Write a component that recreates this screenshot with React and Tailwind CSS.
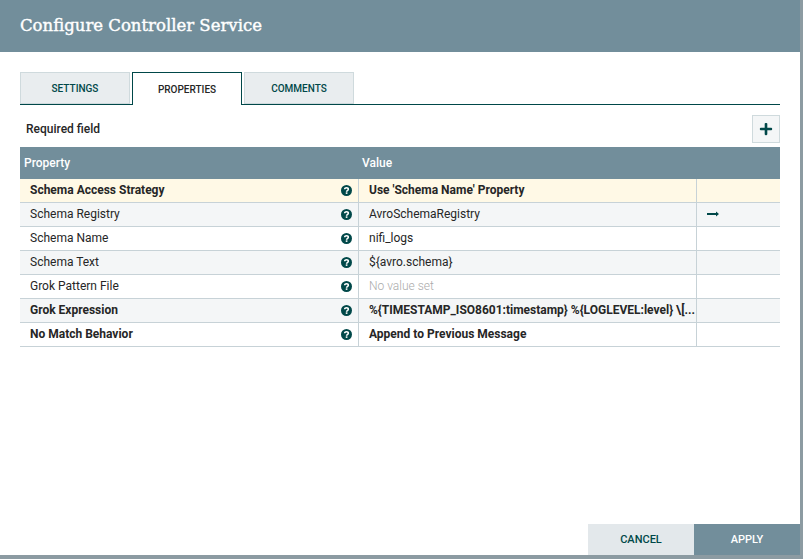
import React from "react";
import { FaPlus } from "react-icons/fa";

const rows = [
	{ name: "Schema Access Strategy", value: "Use 'Schema Name' Property", bold: true, bg: "bg-[#fff9e6]" },
	{ name: "Schema Registry", value: "AvroSchemaRegistry", bg: "bg-[#f4f6f7]", arrow: true },
	{ name: "Schema Name", value: "nifi_logs", bg: "bg-white" },
	{ name: "Schema Text", value: "${avro.schema}", bg: "bg-[#f4f6f7]" },
	{ name: "Grok Pattern File", value: "No value set", bg: "bg-white", empty: true },
	{
		name: "Grok Expression",
		value: "%{TIMESTAMP_ISO8601:timestamp} %{LOGLEVEL:level} \\[...",
		bold: true,
		bg: "bg-[#f4f6f7]",
	},
	{ name: "No Match Behavior", value: "Append to Previous Message", bold: true, bg: "bg-white" },
];

function HelpIcon() {
	return (
		<svg viewBox="0 0 24 24" className="w-[11px] h-[11px] shrink-0">
			<circle cx="12" cy="12" r="12" fill="#004849" />
			<path
				d="M8 9.5C8 7.2 9.8 6 12 6s4 1.3 4 3.4c0 3-3.8 2.8-3.8 5.2"
				fill="none"
				stroke="#fff"
				strokeWidth="3.4"
			/>
			<rect x="10.4" y="16" width="3.6" height="3.4" fill="#fff" />
		</svg>
	);
}

function ArrowIcon() {
	return (
		<svg viewBox="0 0 12 6" className="w-3 h-[6px] mb-[1px]">
			<path d="M0 2h9V0.5L12 3 9 5.5V4H0z" fill="#004849" />
		</svg>
	);
}

function Tab({ label, active }) {
	return (
		<div
			className={
				active
					? "w-[110px] h-[33px] border border-b-0 border-[#004849] bg-white flex items-center justify-center text-[10px] font-medium text-[#262626] z-10"
					: "w-[110px] h-[32px] border border-[#cfdadd] bg-[#e9edef] flex items-center justify-center text-[10px] font-medium text-[#004849]"
			}>
			{label}
		</div>
	);
}

export default function App() {
	return (
		<div className="w-[803px] h-[559px] bg-[#8c9ba2] font-['Roboto',sans-serif] overflow-hidden">
			<div className="w-[800px] h-[555px] bg-white flex flex-col">
				<div className="h-[52px] bg-[#728e9b] flex items-center pl-5 shrink-0">
					<h1 className="font-['DejaVu_Serif',serif] text-white text-[16.5px] [-webkit-text-stroke:0.4px_white]">
						Configure Controller Service
					</h1>
				</div>

				<div className="flex-1 px-5 pt-5 flex flex-col">
					<div className="flex gap-[2px] border-b border-[#004849] h-[33px]">
						<Tab label="SETTINGS" />
						<Tab label="PROPERTIES" active />
						<Tab label="COMMENTS" />
					</div>

					<div className="flex items-center justify-between h-[42px] pt-[6px]">
						<span className="pl-[6px] text-xs font-medium text-[#262626]">Required field</span>
						<button className="w-7 h-7 border border-[#cfdadd] bg-[#f4f6f7] flex items-center justify-center">
							<FaPlus size={14} color="#004849" />
						</button>
					</div>

					<div className="h-8 bg-[#728e9b] flex items-center text-white text-xs font-medium shrink-0">
						<div className="w-[338px] pl-1">Property</div>
						<div className="pl-1">Value</div>
					</div>

					{rows.map((row) => (
						<div key={row.name} className={`flex h-6 border-b border-[#c7d2d7] text-xs text-[#262626] ${row.bg}`}>
							<div className={`w-[338px] pl-[10px] pr-[6px] pb-[1px] flex items-center justify-between ${row.bold ? "font-bold" : ""}`}>
								<span>{row.name}</span>
								<HelpIcon />
							</div>
							<div
								className={`w-[338px] border-l border-[#c7d2d7] pl-[10px] pr-[2px] pb-[1px] flex items-center min-w-0 ${row.bold ? "font-bold" : ""} ${row.empty ? "text-[#aaaaaa] font-light" : ""}`}>
								<span className="whitespace-nowrap">{row.value}</span>
							</div>
							<div className="flex-1 border-l border-[#c7d2d7] pl-[10px] flex items-center">
								{row.arrow && <ArrowIcon />}
							</div>
						</div>
					))}
				</div>

				<div className="flex justify-end shrink-0">
					<button className="w-[106px] h-[31px] pt-[2px] bg-[#e3e8eb] text-[#004849] text-[11px] font-medium">CANCEL</button>
					<button className="w-[106px] h-[31px] pt-[2px] bg-[#728e9b] text-white text-[11px] font-medium">APPLY</button>
				</div>
			</div>
		</div>
	);
}
